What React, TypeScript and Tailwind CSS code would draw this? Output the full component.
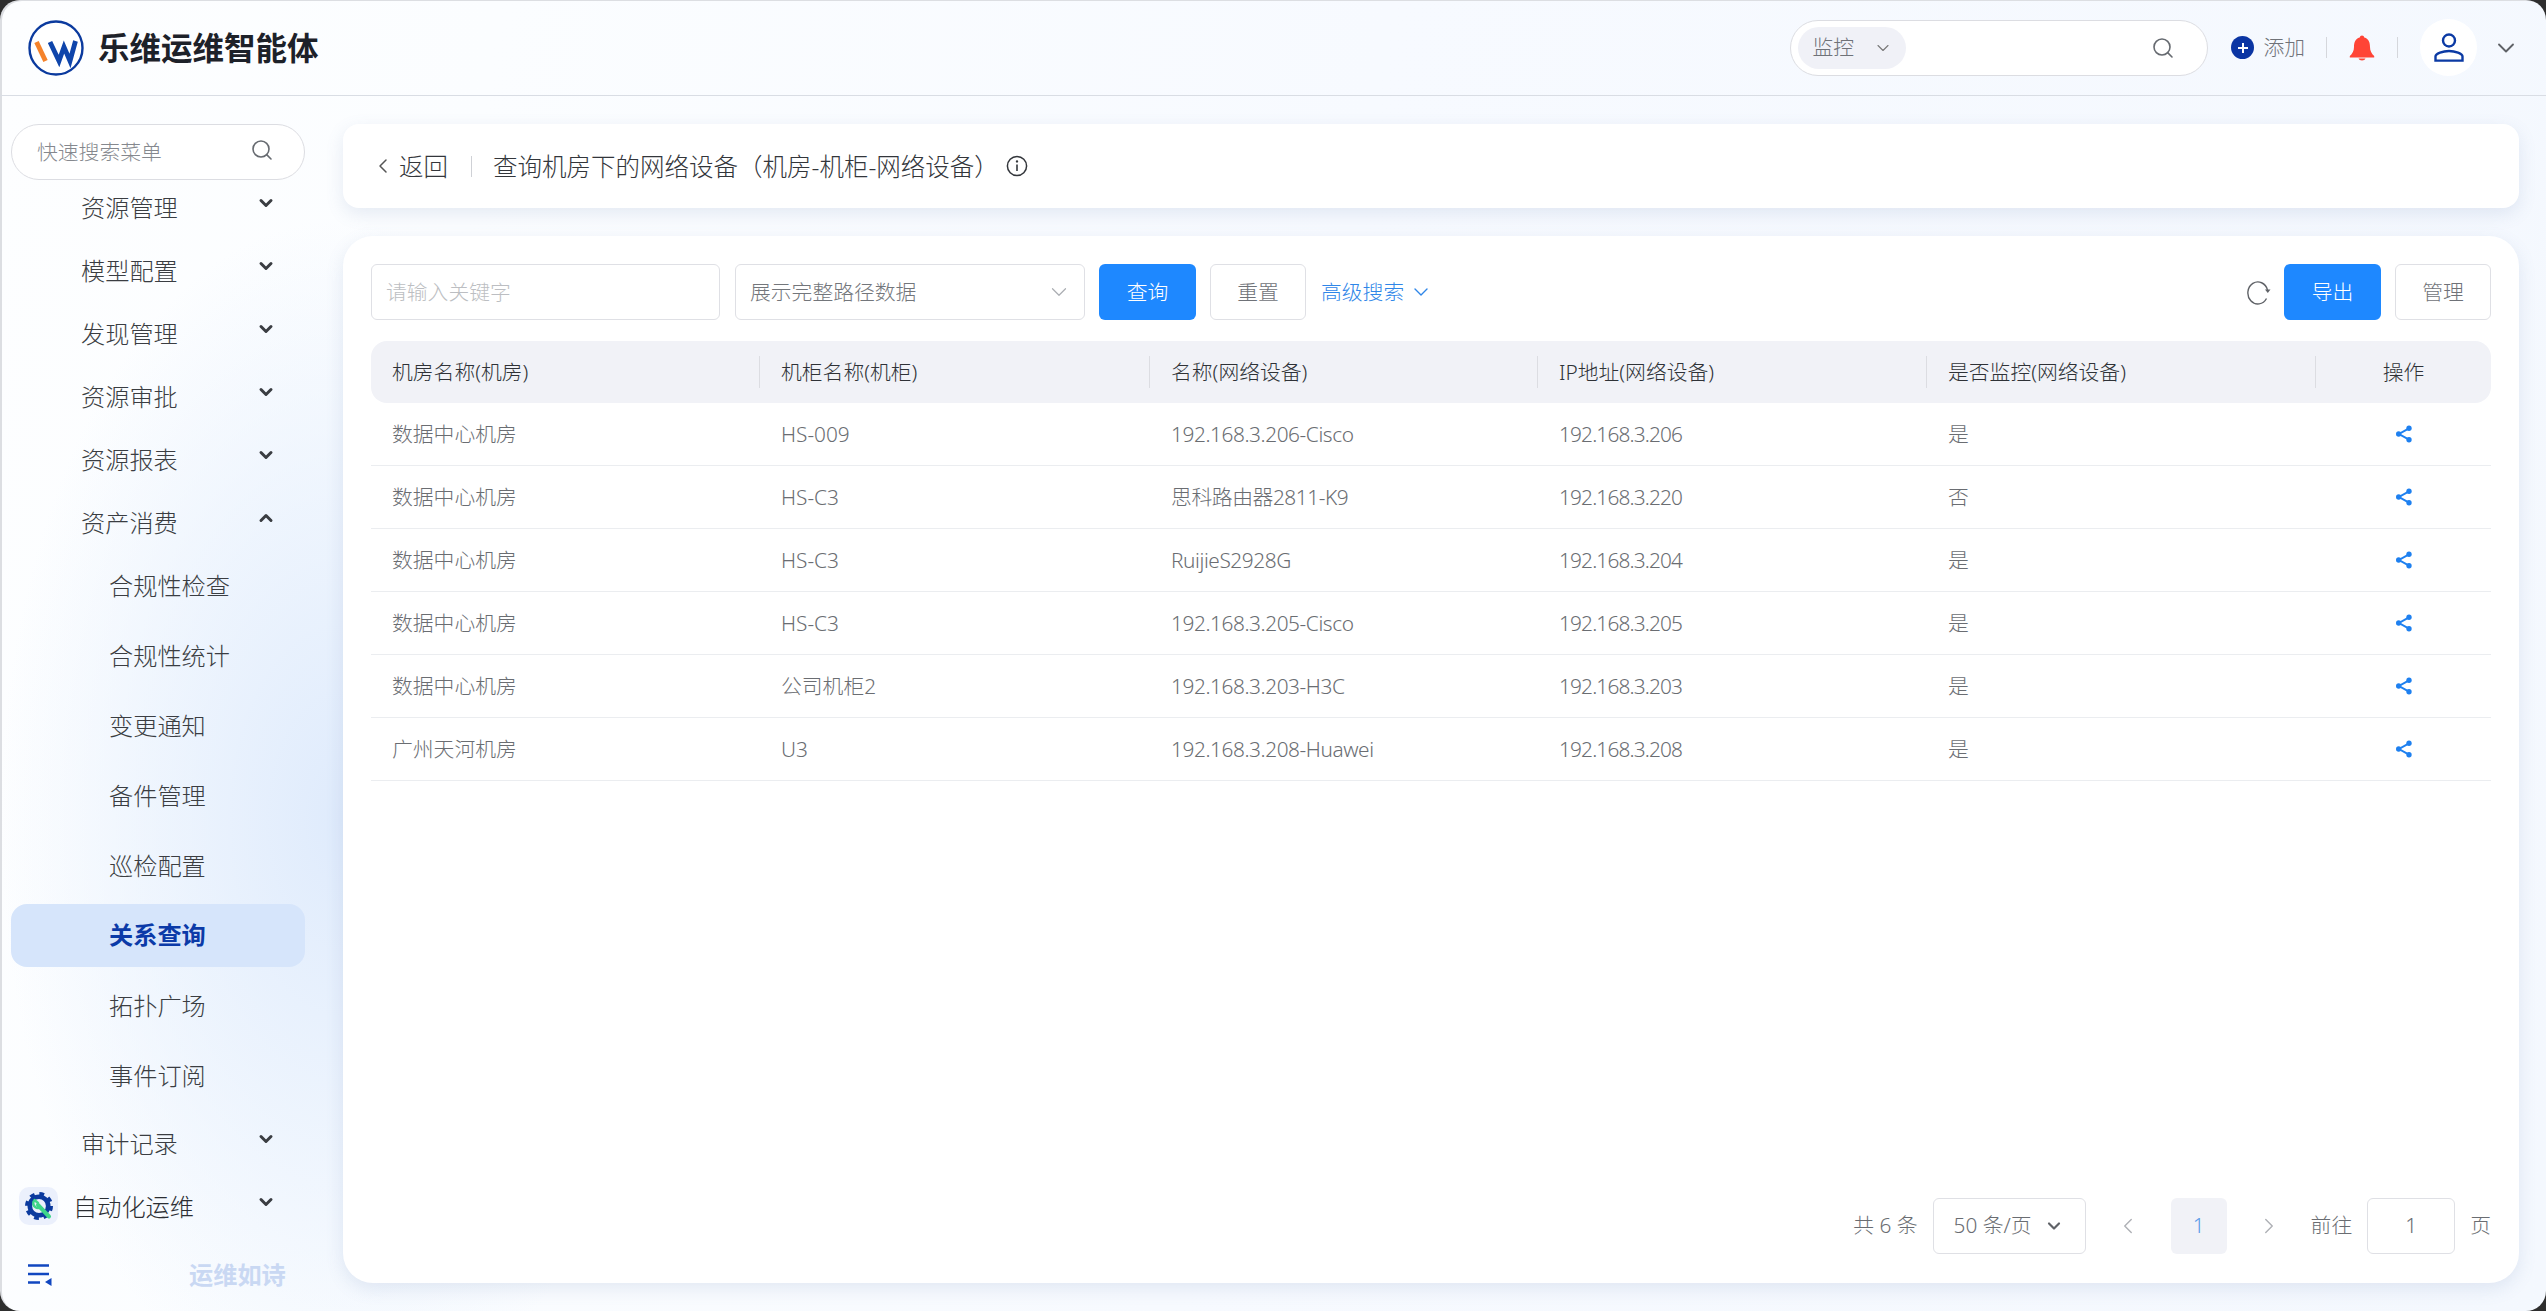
import { ChevronDown, ChevronLeft, ChevronRight, ChevronUp, Search } from "lucide-react";

const FONT = "font-['Noto_Sans','Noto_Sans_CJK_SC',sans-serif]";

const rows = [
  ["数据中心机房", "HS-009", "192.168.3.206-Cisco", "192.168.3.206", "是"],
  ["数据中心机房", "HS-C3", "思科路由器2811-K9", "192.168.3.220", "否"],
  ["数据中心机房", "HS-C3", "RuijieS2928G", "192.168.3.204", "是"],
  ["数据中心机房", "HS-C3", "192.168.3.205-Cisco", "192.168.3.205", "是"],
  ["数据中心机房", "公司机柜2", "192.168.3.203-H3C", "192.168.3.203", "是"],
  ["广州天河机房", "U3", "192.168.3.208-Huawei", "192.168.3.208", "是"],
];

const headers = ["机房名称(机房)", "机柜名称(机柜)", "名称(网络设备)", "IP地址(网络设备)", "是否监控(网络设备)"];

const subItems = ["合规性检查", "合规性统计", "变更通知", "备件管理", "巡检配置", "关系查询", "拓扑广场", "事件订阅"];

// the cell font runs wider than the reference's on latin text, so the two columns are pulled in
const cellTracking = ["", "", "tracking-[-0.02em]", "tracking-[-0.04em]", ""];

const Logo = () => (
  <svg viewBox="0 0 56 56" className="w-[56px] h-[56px] shrink-0">
    <circle cx="28" cy="28" r="26.5" fill="#fff" stroke="#0b3a9e" strokeWidth="2.4" />
    <path d="M8.5 22 L17.5 41" stroke="#f5822a" strokeWidth="4.8" fill="none" />
    <path d="M22 22 L31 41 L36 27 L42 41 L47.5 21" stroke="#0f45ab" strokeWidth="4.8" fill="none" strokeLinejoin="miter" />
  </svg>
);

const GearIcon = () => (
  <svg viewBox="0 0 28 28" className="w-[28px] h-[28px]">
    <circle cx="14" cy="14" r="11.5" fill="none" stroke="#0b3a9e" strokeWidth="5" strokeDasharray="4.5 4.53" />
    <circle cx="14" cy="14" r="9.2" fill="none" stroke="#0b3a9e" strokeWidth="4.6" />
    <path d="M13 13 L24 24.5" stroke="#3ed688" strokeWidth="4" strokeLinecap="round" />
    <path d="M8.5 9.5 a5 5 0 0 0 7 6 M9.5 8 l3.5 3" stroke="#3ed688" strokeWidth="2.4" fill="none" strokeLinecap="round" />
  </svg>
);

const ShareIcon = () => (
  <svg viewBox="0 0 18 18" className="w-[20px] h-[20px]">
    <path d="M13.5 4 L4.5 9 L13.5 14" stroke="#1e80f0" strokeWidth="1.8" fill="none" />
    <circle cx="13.5" cy="3.8" r="2.4" fill="#1e80f0" />
    <circle cx="4.2" cy="9" r="2.4" fill="#1e80f0" />
    <circle cx="13.5" cy="14.2" r="2.4" fill="#1e80f0" />
  </svg>
);

const RefreshIcon = () => (
  <svg viewBox="0 0 26 26" className="ml-auto w-[26px] h-[26px]">
    <path d="M20.5 19.5 A10 11 0 1 1 21.5 11" fill="none" stroke="#5f6267" strokeWidth="1.4" />
    <path d="M19 10.5 H24.5 L21.8 14 Z" fill="#5f6267" />
  </svg>
);

const NavRow = ({ label, open }: { label: string; open?: boolean }) => (
  <div className="h-[63px] shrink-0 pl-[81px] pr-[67px] pt-[2px] flex items-center justify-between text-[24.2px] font-light text-[#3a3d42]">
    <span>{label}</span>
    {open ? (
      <ChevronUp size={20} strokeWidth={3.6} className="text-[#3a3d42] -mt-[11px]" />
    ) : (
      <ChevronDown size={20} strokeWidth={3.6} className="text-[#3a3d42] -mt-[11px]" />
    )}
  </div>
);

const Sidebar = () => (
  <aside className="w-[343px] shrink-0 flex flex-col overflow-hidden">
    <div className="pl-[11px] pt-[28px] shrink-0 relative z-10">
      <div className="w-[294px] h-[56px] rounded-full border border-[#dcdde2] bg-white flex items-center justify-between pl-[25px] pr-[30px]">
        <span className="text-[20.8px] font-light text-[#85888e] pt-[2px]">快速搜索菜单</span>
        <Search size={24} strokeWidth={1.6} className="text-[#666a70] -mt-[4px]" />
      </div>
    </div>
    <nav className="flex-1 min-h-0 flex flex-col -mt-[4px]">
      <NavRow label="资源管理" />
      <NavRow label="模型配置" />
      <NavRow label="发现管理" />
      <NavRow label="资源审批" />
      <NavRow label="资源报表" />
      <NavRow label="资产消费" open />
      <div className="flex flex-col gap-[7px] pb-[5px]">
        {subItems.map((item) =>
          item === "关系查询" ? (
            <div
              key={item}
              className="ml-[11px] w-[294px] h-[63px] rounded-[16px] bg-[#d6e5fb] pl-[98px] flex items-center text-[24.2px] font-bold text-[#0b3aa8]"
            >
              {item}
            </div>
          ) : (
            <div key={item} className="h-[63px] pl-[109px] pt-[2px] flex items-center text-[24.2px] font-light text-[#3a3d42]">
              {item}
            </div>
          ),
        )}
      </div>
      <NavRow label="审计记录" />
      <div className="h-[63px] shrink-0 pl-[19px] pr-[67px] flex items-center justify-between text-[24.2px] font-light text-[#2b2e33]">
        <div className="flex items-center gap-[15px]">
          <span className="w-[39px] h-[38px] rounded-[10px] bg-[#ebf0fc] flex items-center justify-center">
            <GearIcon />
          </span>
          <span className="pt-[2px]">自动化运维</span>
        </div>
        <ChevronDown size={20} strokeWidth={3.6} className="text-[#3a3d42] -mt-[9px]" />
      </div>
    </nav>
    <div className="h-[70px] shrink-0 pl-[28px] flex items-center gap-[137px] pb-[2px]">
      <svg viewBox="0 0 24 22" className="w-[24px] h-[22px]">
        <path d="M0 1.5 H21 M0 10 H21 M0 18.5 H12" stroke="#1147c0" strokeWidth="2.4" fill="none" />
        <path d="M23.5 14 V22 L17 18 Z" fill="#1147c0" />
      </svg>
      <span className="text-[24.2px] font-bold text-[#c9d8f3]">运维如诗</span>
    </div>
  </aside>
);

const Header = () => (
  <header className="h-[96px] shrink-0 border-b border-[#d9dde4] flex items-center pl-[28px] pr-[26px]">
    <Logo />
    <h1 className="ml-[14px] text-[31.5px] font-bold text-[#1d2129]">乐维运维智能体</h1>
    <div className="ml-auto w-[418px] h-[56px] rounded-full border border-[#dcdde2] bg-white flex items-center pl-[7px] pr-[32px] justify-between">
      <div className="w-[108px] h-[42px] rounded-full bg-[#f0f1f7] flex items-center justify-between pl-[14px] pr-[13px]">
        <span className="text-[20.8px] font-light text-[#6f7278] pt-[1px]">监控</span>
        <ChevronDown size={20} strokeWidth={1.3} className="text-[#777]" />
      </div>
      <Search size={24} strokeWidth={1.6} className="text-[#666a70]" />
    </div>
    <span className="ml-[23px] w-[23px] h-[23px] rounded-full bg-[#0b35a3] flex items-center justify-center">
      <svg viewBox="0 0 12 12" className="w-[12px] h-[12px]">
        <path d="M6 1 V11 M1 6 H11" stroke="#fff" strokeWidth="2" />
      </svg>
    </span>
    <span className="ml-[9px] text-[20.8px] font-light text-[#6f7278] pt-[1px]">添加</span>
    <span className="ml-[21px] w-px h-[21px] bg-[#d5d7dc]" />
    <svg viewBox="0 0 26 26" className="ml-[22px] w-[26px] h-[26px]">
      <path
        d="M13 0.5 a2.4 2.4 0 0 1 2.3 2 C20 3.6 21 8 21 12 c0 4 1.6 6.6 4.2 9 V22.5 H0.8 V21 C3.4 18.6 5 16 5 12 c0-4 1-8.4 5.7-9.5 A2.4 2.4 0 0 1 13 0.5 Z"
        fill="#ff4436"
      />
      <path d="M9.5 23.5 a3.6 2.6 0 0 0 7 0 Z" fill="#ff4436" />
    </svg>
    <span className="ml-[22px] w-px h-[21px] bg-[#d5d7dc]" />
    <span className="ml-[22px] w-[57px] h-[57px] rounded-full bg-white flex items-center justify-center">
      <svg viewBox="0 0 30 29" className="w-[30px] h-[29px]">
        <circle cx="15" cy="7.5" r="6" fill="none" stroke="#0b3aa4" strokeWidth="2.4" />
        <path d="M1.5 27.6 V23.5 C1.5 20.5 9 18 15 18 C21 18 28.5 20.5 28.5 23.5 V27.6 Z" fill="none" stroke="#0b3aa4" strokeWidth="2.4" />
      </svg>
    </span>
    <ChevronDown size={28} strokeWidth={1.6} className="ml-[15px] text-[#5f6267]" />
  </header>
);

const TitleCard = () => (
  <section className="h-[84px] shrink-0 rounded-[16px] bg-white shadow-[0_6px_18px_rgba(90,120,170,0.14)] flex items-center pl-[28px]">
    <ChevronLeft size={24} strokeWidth={1.5} className="text-[#555]" />
    <span className="ml-[4px] pt-[2px] text-[24.5px] font-light text-[#33363b]">返回</span>
    <span className="ml-[23px] w-px h-[21px] bg-[#cfd1d6]" />
    <span className="ml-[21px] pt-[2px] text-[24.5px] font-light text-[#33363b] whitespace-nowrap">查询机房下的网络设备（机房-机柜-网络设备）</span>
    <svg viewBox="0 0 22 22" className="ml-[7px] w-[22px] h-[22px]">
      <circle cx="11" cy="11" r="9.6" fill="none" stroke="#33363b" strokeWidth="1.5" />
      <path d="M11 9.5 V16" stroke="#33363b" strokeWidth="1.6" />
      <circle cx="11" cy="6.4" r="1.2" fill="#33363b" />
    </svg>
  </section>
);

const Toolbar = () => (
  <div className="h-[56px] flex items-center text-[20.8px] font-light">
    <div className="w-[349px] h-[56px] rounded-[6px] border border-[#dfe0e5] flex items-center pl-[14px] pt-[2px] text-[#bcbec2]">请输入关键字</div>
    <div className="ml-[15px] w-[350px] h-[56px] rounded-[6px] border border-[#dfe0e5] flex items-center justify-between pl-[14px] pr-[12px] text-[#73767b]">
      <span className="pt-[2px]">展示完整路径数据</span>
      <ChevronDown size={26} strokeWidth={1.1} className="text-[#aaadb2]" />
    </div>
    <button className="ml-[14px] w-[97px] h-[56px] rounded-[6px] bg-[#1e88ff] text-white pt-[2px]">查询</button>
    <button className="ml-[14px] w-[96px] h-[56px] rounded-[6px] border border-[#dfe0e5] text-[#6f7278] pt-[2px]">重置</button>
    <span className="ml-[15px] text-[#2f86e8] pt-[2px]">高级搜索</span>
    <ChevronDown size={24} strokeWidth={1.4} className="ml-[5px] text-[#2f86e8]" />
    <RefreshIcon />
    <button className="ml-[12px] w-[97px] h-[56px] rounded-[6px] bg-[#1e88ff] text-white pt-[2px]">导出</button>
    <button className="ml-[14px] w-[96px] h-[56px] rounded-[6px] border border-[#dfe0e5] text-[#6f7278] pt-[2px]">管理</button>
  </div>
);

const Table = () => (
  <div className="mt-[21px] flex-1">
    <div className="h-[62px] rounded-[16px] bg-[#f1f2f7] grid grid-cols-[389px_390px_388px_389px_389px_1fr] items-center text-[20.8px] font-light text-[#2f3237]">
      {headers.map((h, i) => (
        <div key={h} className={`h-[32px] flex items-center pl-[21px] pt-[2px] ${i < 4 ? "border-r border-[#dcdde2]" : ""}`}>
          {h}
        </div>
      ))}
      <div className="h-[32px] flex items-center justify-center pt-[2px] border-l border-[#dcdde2] -ml-px">操作</div>
    </div>
    {rows.map((row, i) => (
      <div
        key={i}
        className="h-[63px] border-b border-[#ebedf0] grid grid-cols-[389px_390px_388px_389px_389px_1fr] items-center text-[20.8px] font-light text-[#6a6d72]"
      >
        {row.map((cell, j) => (
          <div key={j} className={`pl-[21px] pt-[2px] whitespace-nowrap ${cellTracking[j]}`}>
            {cell}
          </div>
        ))}
        <div className="flex justify-center">
          <ShareIcon />
        </div>
      </div>
    ))}
  </div>
);

const Pagination = () => (
  <div className="h-[56px] flex items-center justify-end text-[20.8px] font-light text-[#6a6d72]">
    <span>共 6 条</span>
    <div className="ml-[15px] w-[153px] h-[56px] rounded-[6px] border border-[#dfe0e5] flex items-center justify-between pl-[20px] pr-[21px]">
      <span>50 条/页</span>
      <ChevronDown size={20} strokeWidth={2.6} className="text-[#5f6267]" />
    </div>
    <ChevronLeft size={26} strokeWidth={1.3} className="ml-[29px] text-[#aeb0b5]" />
    <div className="ml-[30px] w-[56px] h-[56px] rounded-[6px] bg-[#f1f2f7] flex items-center justify-center text-[#5b9be8]">1</div>
    <ChevronRight size={26} strokeWidth={1.3} className="ml-[29px] text-[#aeb0b5]" />
    <span className="ml-[29px]">前往</span>
    <div className="ml-[15px] w-[88px] h-[56px] rounded-[6px] border border-[#dfe0e5] flex items-center justify-center">1</div>
    <span className="ml-[15px]">页</span>
  </div>
);

export default function App() {
  return (
    <div className={`${FONT} w-[2546px] h-[1311px] bg-[#2e2e2e] overflow-hidden`}>
      <div className="w-full h-full rounded-[20px] overflow-hidden shadow-[inset_2px_1px_0_#dcdee2] flex flex-col bg-[radial-gradient(ellipse_340px_600px_at_340px_820px,#dfebfc_0%,rgba(232,241,253,0.75)_50%,rgba(245,249,255,0)_100%),linear-gradient(100deg,#fdfeff_0%,#fbfdff_18%,#f7faff_50%,#f4f8fe_100%)]">
        <Header />
        <div className="flex-1 min-h-0 flex">
          <Sidebar />
          <main className="flex-1 min-w-0 flex flex-col gap-[28px] pt-[28px] pb-[28px] pr-[27px]">
            <TitleCard />
            <section className="flex-1 min-h-0 rounded-[30px] bg-white shadow-[0_6px_18px_rgba(90,120,170,0.14)] flex flex-col pt-[28px] px-[28px] pb-[29px]">
              <Toolbar />
              <Table />
              <Pagination />
            </section>
          </main>
        </div>
      </div>
    </div>
  );
}
